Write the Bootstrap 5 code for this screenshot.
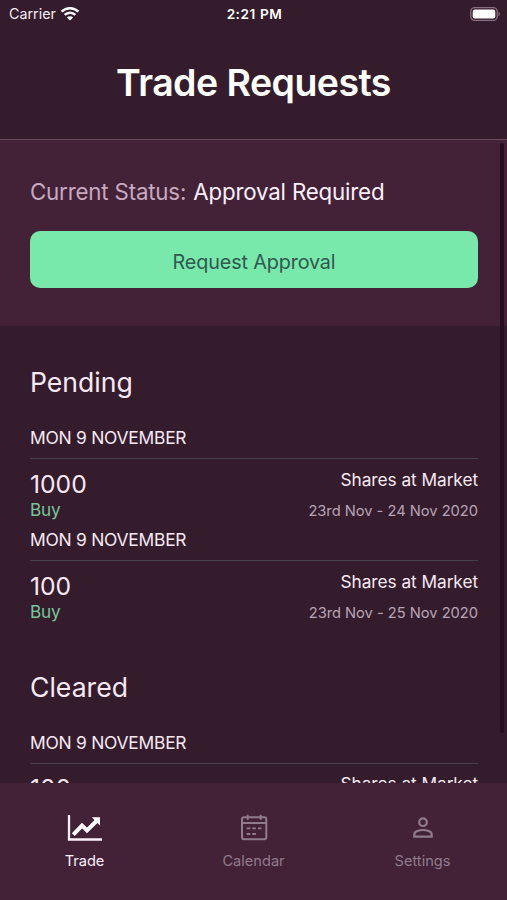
<!DOCTYPE html>
<html lang="en">
<head>
<meta charset="utf-8">
<meta name="viewport" content="width=device-width, initial-scale=1">
<title>Trade Requests</title>
<link href="https://cdn.jsdelivr.net/npm/bootstrap@5.3.0/dist/css/bootstrap.min.css" rel="stylesheet">
<style>
body{font-family:Inter,"Liberation Sans",sans-serif;background:#341c2c;color:#f7e9f4;height:900px}
.status-bar{height:28px;font-size:14.3px;line-height:28px;padding:0 7px 0 9px}
.status-bar .clock{font-weight:600;color:#fff;font-size:13.6px;letter-spacing:.5px;word-spacing:.5px}
.page-title{font-size:37.5px;font-weight:600;line-height:50px;letter-spacing:-.55px;color:#fff;padding-top:30px}
.app-header{height:139.5px;border-bottom:1px solid #6a4a5f}
.status-panel{background:#432238;height:186.5px;padding:36px 29px 0 30px}
.status-line{font-size:22.3px;letter-spacing:-.18px;line-height:32px;color:#c8a9c0;margin-bottom:23px}
.status-line span{color:#fdf0fb;margin-left:1px}
.btn-approve,.btn-approve:hover{background:#78e8ab;color:#30584f;font-size:19.8px;letter-spacing:-.14px;line-height:26px;height:57px;border:0;border-radius:10px;padding:5px 0 0}
.scroll-area{min-height:0}
.trade-list{padding:36.3px 29px 0 30px}
.section-title{font-size:26.6px;font-weight:400;line-height:40px;margin-bottom:16px}
.section-gap{margin-top:44.9px}
.day{font-size:17.4px;letter-spacing:-.24px;line-height:40px;height:41px;border-bottom:1px solid #48424f}
.trade{height:60.8px;padding-top:10.5px}
.qty{font-size:24.7px;line-height:28.6px;margin-bottom:1.4px}
.side{font-size:17.2px;letter-spacing:-.2px;line-height:20px;color:#74c79b}
.kind{font-size:17.3px;letter-spacing:-.06px;line-height:20px}
.dates{font-size:14.7px;letter-spacing:-.02px;line-height:20px;margin-top:11px;color:#b9a4b7}
.scroll-thumb{top:3px;right:3.5px;width:4px;height:590px;border-radius:2px;background:#270f21}
.tab-bar{height:117.5px;background:#432238;padding-top:27px}
.tab-item{font-size:14.6px;line-height:20px;color:#907b8c}
.tab-item svg{display:block;height:36px;margin-bottom:5px}
.tab-item.current{color:#fdf0fb}
</style>
</head>
<body class="d-flex flex-column overflow-hidden">
<header class="app-header flex-shrink-0">
  <div class="status-bar row g-0">
    <div class="col d-flex align-items-center gap-1">
      <span class="carrier">Carrier</span>
      <svg width="20" height="16" viewBox="0 0 20 16" fill="none" stroke="#fff" stroke-width="2.5"><path d="M1.6 5.7a12 12 0 0 1 16.8 0M4.7 8.9a7.6 7.6 0 0 1 10.6 0"/><path d="M10 14.6 6.9 11.5a4.4 4.4 0 0 1 6.2 0Z" fill="#fff" stroke="none"/></svg>
    </div>
    <div class="col-auto clock">2:21 PM</div>
    <div class="col d-flex align-items-center justify-content-end">
      <svg width="30" height="15" viewBox="0 0 30 15"><rect x=".8" y=".6" width="26.4" height="12.8" rx="4" fill="none" stroke="#89717f" stroke-width="1.3"/><rect x="2.7" y="2.5" width="22.6" height="9" rx="2.2" fill="#fff"/><path d="M28.5 4.8v4.4q1.4-.6 1.4-2.2t-1.4-2.2Z" fill="#89717f"/></svg>
    </div>
  </div>
  <h1 class="page-title text-center m-0">Trade Requests</h1>
</header>

<main class="scroll-area flex-grow-1 overflow-hidden position-relative">
  <section class="status-panel">
    <div class="status-line">Current Status: <span>Approval Required</span></div>
    <button type="button" class="btn btn-approve w-100">Request Approval</button>
  </section>
  <section class="trade-list">
    <h2 class="section-title">Pending</h2>
    <div class="day">MON 9 NOVEMBER</div>
    <div class="trade d-flex justify-content-between">
      <div><div class="qty">1000</div><div class="side">Buy</div></div>
      <div class="text-end"><div class="kind">Shares at Market</div><div class="dates">23rd Nov - 24 Nov 2020</div></div>
    </div>
    <div class="day">MON 9 NOVEMBER</div>
    <div class="trade d-flex justify-content-between">
      <div><div class="qty">100</div><div class="side">Buy</div></div>
      <div class="text-end"><div class="kind">Shares at Market</div><div class="dates">23rd Nov - 25 Nov 2020</div></div>
    </div>
    <h2 class="section-title section-gap">Cleared</h2>
    <div class="day">MON 9 NOVEMBER</div>
    <div class="trade d-flex justify-content-between">
      <div class="qty">100</div>
      <div class="kind">Shares at Market</div>
    </div>
  </section>
  <div class="scroll-thumb position-absolute"></div>
</main>

<nav class="tab-bar row g-0 flex-shrink-0">
  <div class="col tab-item current d-flex flex-column align-items-center">
    <svg width="36" viewBox="0 0 36 36"><path d="M2 5v24.5h33" fill="none" stroke="currentColor" stroke-width="2.3"/><path d="m6.3 24.6 8.7-9 5 4.8L30 10.5" fill="none" stroke="#fff" stroke-width="4"/><path d="M24.8 7.2H33v8.2Z" fill="#fff"/></svg>
    Trade
  </div>
  <div class="col tab-item d-flex flex-column align-items-center">
    <svg width="36" viewBox="0 0 36 36" fill="none" stroke="currentColor" stroke-width="2"><rect x="6" y="7.3" width="24.3" height="22" rx="2"/><path d="M6 13h24M11.7 4.7v5M24.7 4.7v5"/><path d="M10.7 18.4h3.6m2 0h3.6m2 0h3.6M10.7 24h3.6m2 0h3.6" stroke-width="1.8"/></svg>
    Calendar
  </div>
  <div class="col tab-item d-flex flex-column align-items-center">
    <svg width="36" viewBox="0 0 36 36" fill="none" stroke="currentColor" stroke-width="2.2"><circle cx="18" cy="12.2" r="3.8"/><path d="M9.3 26.6v-2.2c0-3 5.4-4.4 8.7-4.4s8.7 1.4 8.7 4.4v2.2Z"/></svg>
    Settings
  </div>
</nav>
<script src="https://cdn.jsdelivr.net/npm/bootstrap@5.3.0/dist/js/bootstrap.bundle.min.js"></script>
</body>
</html>
